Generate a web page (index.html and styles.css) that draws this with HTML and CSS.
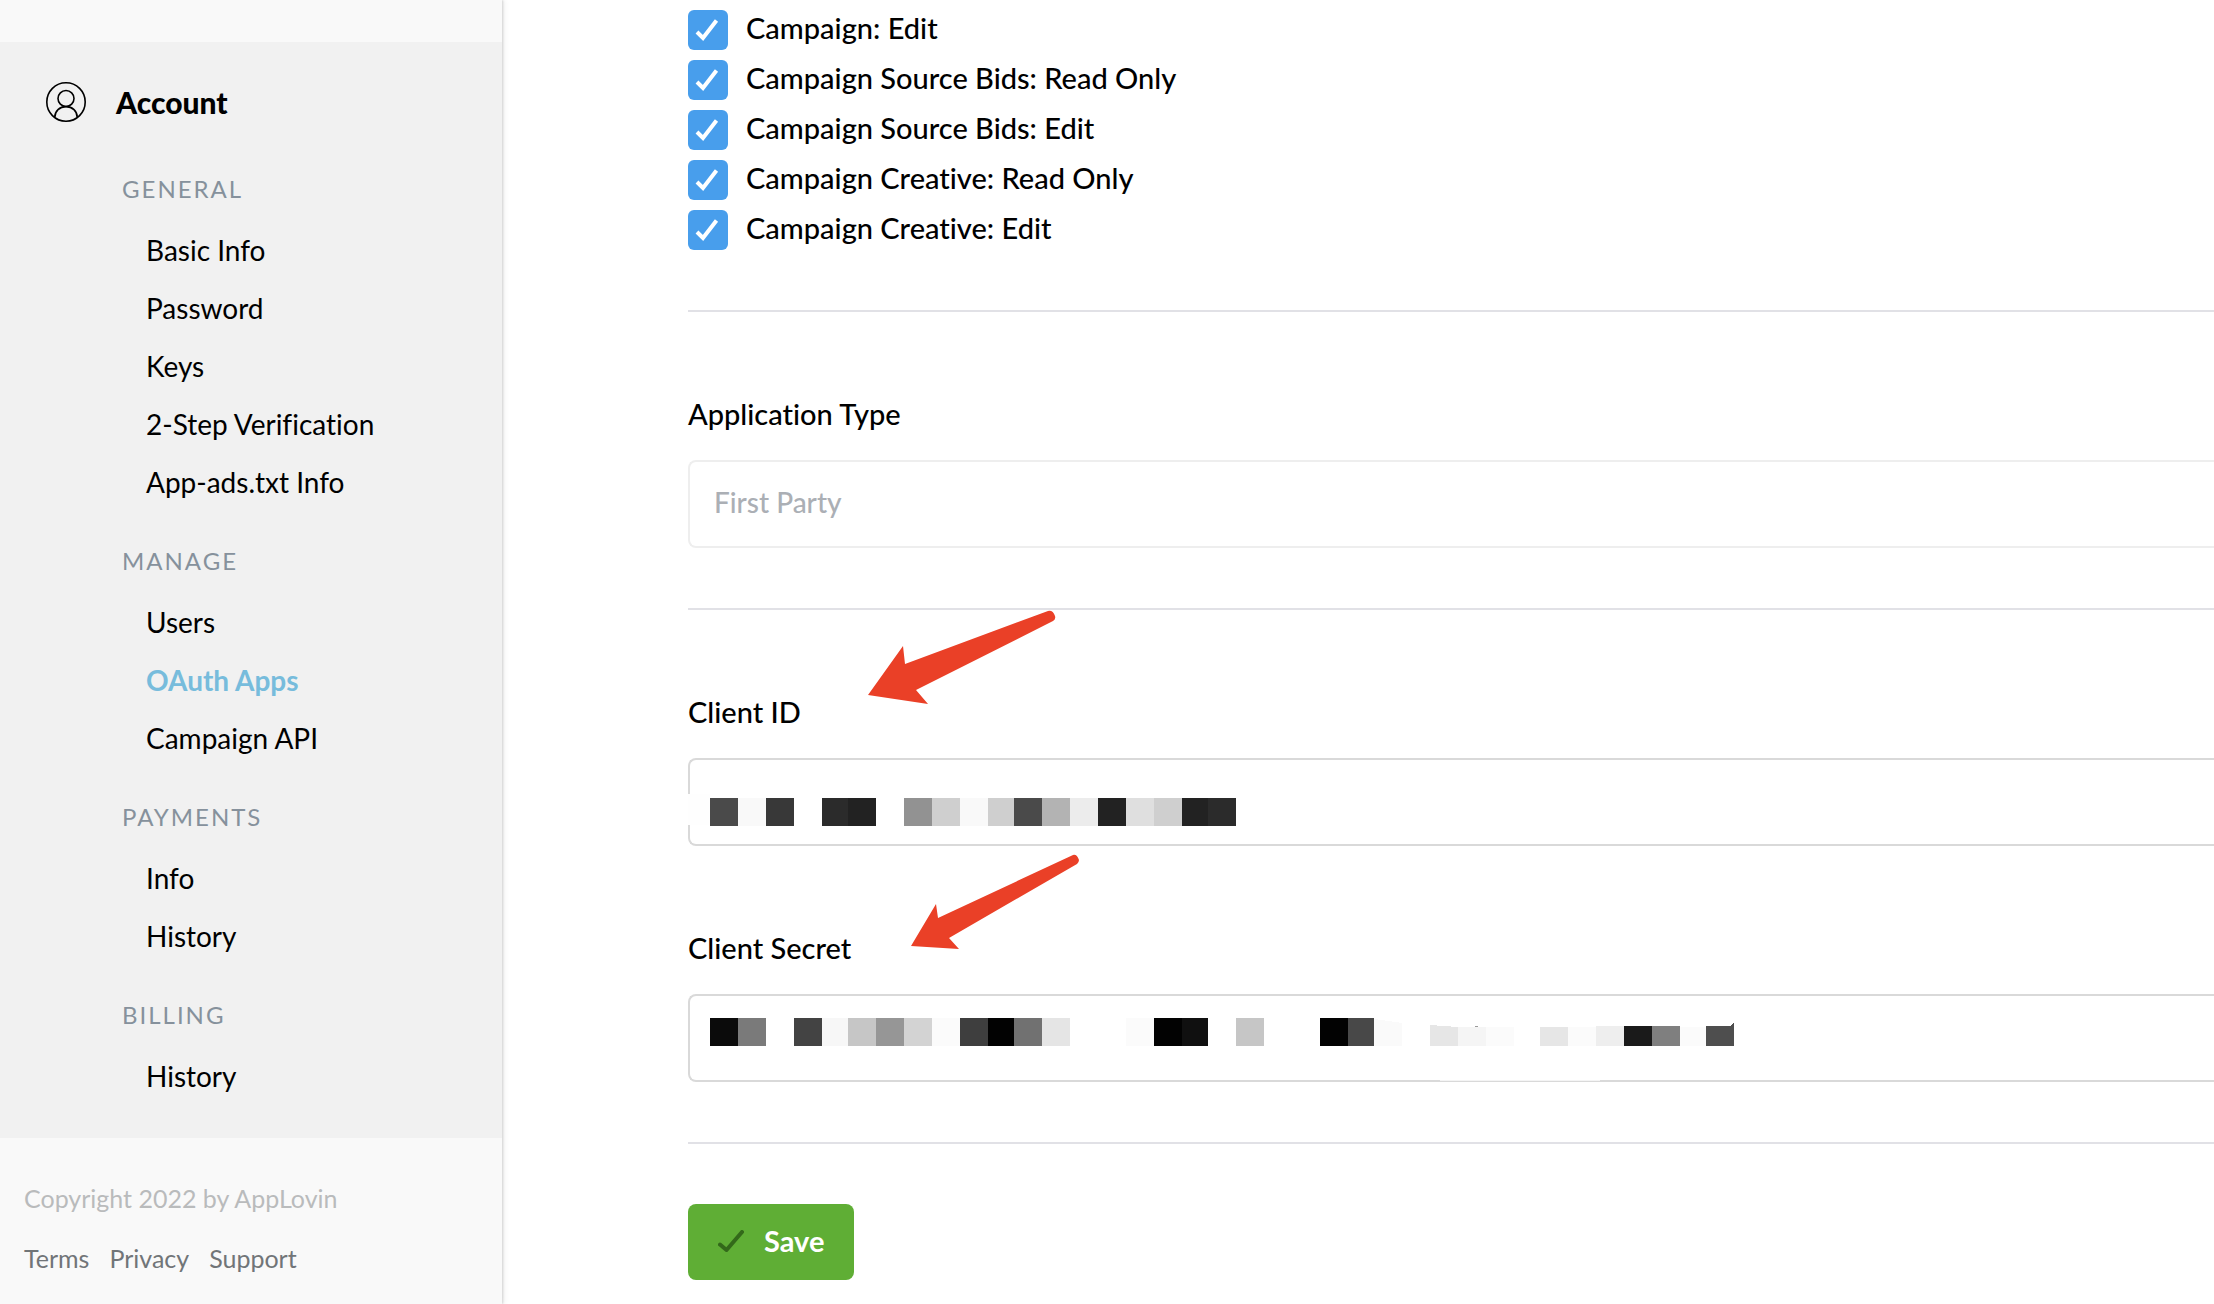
FILE: index.html
```html
<!DOCTYPE html>
<html lang="en">
<head>
<meta charset="utf-8">
<title>OAuth Apps</title>
<link rel="stylesheet" href="styles.css">
</head>
<body>
<div class="layout">
  <aside class="sidebar">
    <nav class="nav">
      <h2 class="nav-head">
        <svg class="nav-icon" viewBox="0 0 40 40" fill="none" stroke="currentColor" stroke-width="1.6"><circle cx="20" cy="20" r="19.2"/><circle cx="20" cy="16.5" r="8"/><path d="M8.800 35.200c0-6 4.800-10.600 11.200-10.600s11.200 4.600 11.200 10.600"/></svg>
        <span>Account</span>
      </h2>
      <h3 class="group-title">GENERAL</h3>
      <ul class="group">
        <li><a href="#">Basic Info</a></li>
        <li><a href="#">Password</a></li>
        <li><a href="#">Keys</a></li>
        <li><a href="#">2-Step Verification</a></li>
        <li><a href="#">App-ads.txt Info</a></li>
      </ul>
      <h3 class="group-title">MANAGE</h3>
      <ul class="group">
        <li><a href="#">Users</a></li>
        <li><a href="#" class="active">OAuth Apps</a></li>
        <li><a href="#">Campaign API</a></li>
      </ul>
      <h3 class="group-title">PAYMENTS</h3>
      <ul class="group">
        <li><a href="#">Info</a></li>
        <li><a href="#">History</a></li>
      </ul>
      <h3 class="group-title">BILLING</h3>
      <ul class="group">
        <li><a href="#">History</a></li>
      </ul>
    </nav>
    <footer class="footer">
      <p class="copyright">Copyright 2022 by AppLovin</p>
      <div class="footer-links"><a href="#">Terms</a><a href="#">Privacy</a><a href="#">Support</a></div>
    </footer>
  </aside>
  <main class="main">
    <form class="form">
      <div class="scopes">
        <label class="scope"><input type="checkbox" checked><span>Campaign: Edit</span></label>
        <label class="scope"><input type="checkbox" checked><span>Campaign Source Bids: Read Only</span></label>
        <label class="scope"><input type="checkbox" checked><span>Campaign Source Bids: Edit</span></label>
        <label class="scope"><input type="checkbox" checked><span>Campaign Creative: Read Only</span></label>
        <label class="scope"><input type="checkbox" checked><span>Campaign Creative: Edit</span></label>
      </div>
      <section class="section">
        <div class="field">
          <label for="app-type">Application Type</label>
          <input id="app-type" class="control" type="text" value="First Party" disabled>
        </div>
      </section>
      <section class="section">
        <div class="field">
          <label for="client-id">Client ID</label>
          <div class="masked">
            <input id="client-id" class="control" type="text">
            <svg class="mask" width="560" height="88" shape-rendering="crispEdges">
              <path fill="#fefefe" d="M0 36h22v31H0z"/>
              <g>
                <path fill="#4a4a4a" d="M22 40h28v28H22zM326 40h28v28h-28z"/>
                <path fill="#f9f9f9" d="M50 40h28v28H50zM272 40h28v28h-28z"/>
                <path fill="#383838" d="M78 40h28v28H78z"/>
                <path fill="#2b2b2b" d="M134 40h26v28h-26zM520 40h28v28h-28z"/>
                <path fill="#222" d="M160 40h28v28h-28zM410 40h28v28h-28zM494 40h26v28h-26z"/>
                <path fill="#929292" d="M216 40h28v28h-28z"/>
                <path fill="#cfcfcf" d="M244 40h28v28h-28zM300 40h26v28h-26zM466 40h28v28h-28z"/>
                <path fill="#b3b3b3" d="M354 40h28v28h-28z"/>
                <path fill="#ececec" d="M382 40h28v28h-28z"/>
                <path fill="#dfdfdf" d="M438 40h28v28h-28z"/>
              </g>
            </svg>
          </div>
          <svg class="arrow arrow-id" width="192" height="96" fill="#ea4027"><path d="M1 85 36 36l2 18L181 1q5-1 7 5 1 3-2 5L49 80l12 14z"/></svg>
        </div>
        <div class="field">
          <label for="client-secret">Client Secret</label>
          <div class="masked">
            <input id="client-secret" class="control" type="text">
            <svg class="mask" width="1060" height="88" shape-rendering="crispEdges">
              <path fill="#0b0b0b" d="M22 24h28v28H22z"/>
              <path fill="#7a7a7a" d="M50 24h28v28H50z"/>
              <path fill="#434343" d="M106 24h28v28h-28z"/>
              <path fill="#f7f7f7" d="M134 24h26v28h-26z"/>
              <path fill="#c6c6c6" d="M160 24h28v28h-28zM548 24h28v28h-28z"/>
              <path fill="#969696" d="M188 24h28v28h-28z"/>
              <path fill="#d3d3d3" d="M216 24h28v28h-28z"/>
              <path fill="#fbfbfb" d="M244 24h28v28h-28zM438 24h28v28h-28z"/>
              <path fill="#3e3e3e" d="M272 24h28v28h-28z"/>
              <path fill="#020202" d="M300 24h26v28h-26zM466 24h28v28h-28zM632 24h28v28h-28z"/>
              <path fill="#717171" d="M326 24h28v28h-28z"/>
              <path fill="#e5e5e5" d="M354 24h28v28h-28z"/>
              <path fill="#101010" d="M494 24h26v28h-26z"/>
              <path fill="#484848" d="M660 24h26v28h-26z"/>
              <path fill="#fafafa" d="M686 25l28 4v23h-28z"/>
              <path fill="#e6e6e6" d="M742 31l28 2v19h-28zM852 33h28v19h-28z"/>
              <path fill="#f5f5f5" d="M770 33h28v19h-28z"/>
              <path fill="#fbfbfb" d="M798 33h28v19h-28zM880 33h28v19h-28zM992 33h26v19h-26z"/>
              <path fill="#eee" d="M908 32h28v20h-28z"/>
              <path fill="#1a1a1a" d="M936 32h28v20h-28z"/>
              <path fill="#7f7f7f" d="M964 32h28v20h-28z"/>
              <path fill="#4e4e4e" d="M1018 32h24l4-3v23h-28z"/>
              <path fill="#9a9a9a" d="M787 32h3v1h-3z"/>
              <path fill="#f4f4f4" d="M752 86h160v1H752z"/>
            </svg>
          </div>
          <svg class="arrow arrow-secret" width="172" height="98" fill="#ea4027"><path d="M1 93 26 51l2 14L163 2q4-1 6 5 0 2-2 4L39 85l10 11z"/></svg>
        </div>
      </section>
      <section class="section actions">
        <button class="save" type="button">
          <svg width="26" height="22" viewBox="0 0 26 22" fill="none" stroke="#33691a" stroke-width="4" stroke-linecap="round" stroke-linejoin="round"><path d="M2 14.500 8.500 20 24 2"/></svg>
          <span>Save</span>
        </button>
      </section>
    </form>
  </main>
</div>
</body>
</html>
```
FILE: styles.css
```css
* {
  box-sizing: border-box;
}

body {
  margin: 0;
  background: #fff;
  color: #000;
  font: 500 28px/40px Lato, "Noto Sans", sans-serif;
  font-variant-ligatures: none;
}

h2, h3, p, ul {
  margin: 0;
  padding: 0;
}

a {
  color: inherit;
  text-decoration: none;
}

.layout {
  display: flex;
  min-height: 100vh;
  overflow: hidden;
}

/* Sidebar */
.sidebar {
  flex: 0 0 502px;
  padding-top: 42px;
  background: #f9f9f9;
  box-shadow: 1px 0 2px #d4d4d4, 2px 0 6px #eee;
}

.nav {
  padding: 40px 0 33px;
  background: #f1f1f1;
}

.nav-head {
  display: flex;
  align-items: center;
  gap: 30px;
  padding-left: 46px;
  font-size: 30px;
  font-weight: 900;
  line-height: 40px;
}

.nav-icon {
  width: 40px;
  height: 40px;
}

.group-title {
  padding: 47px 0 12px 122px;
  color: #86919c;
  font-size: 24px;
  font-weight: 400;
  line-height: 40px;
  letter-spacing: 2px;
}

.group + .group-title {
  padding-top: 30px;
}

.group {
  padding-left: 146px;
  list-style: none;
  font-weight: 400;
}

.group li {
  line-height: 58px;
}

.active {
  color: #77bcdc;
  font-weight: 700;
}

.footer {
  padding: 40px 24px 24px;
  font-size: 25px;
  font-weight: 400;
}

.copyright {
  margin-bottom: 20px;
  color: #b9bbbc;
}

.footer-links {
  display: flex;
  gap: 20px;
  color: #717578;
}

/* Form */
.main {
  flex: 1;
  min-width: 0;
  padding-left: 186px;
}

.scopes {
  display: flex;
  flex-direction: column;
  gap: 10px;
  padding: 10px 0 60px;
}

.scope {
  display: flex;
  gap: 18px;
  font-size: 29px;
}

.scope span {
  line-height: 36px;
}

.scope input {
  appearance: none;
  width: 40px;
  height: 40px;
  margin: 0;
  border-radius: 6px;
  background: #489eec url("data:image/svg+xml,%3Csvg xmlns='http://www.w3.org/2000/svg' viewBox='0 0 40 40'%3E%3Cpath d='M9 22l6 6L28.500 10.500' fill='none' stroke='%23fff' stroke-width='4'/%3E%3C/svg%3E");
}

.section {
  display: flex;
  flex-direction: column;
  gap: 82px;
  padding: 82px 0 60px;
  border-top: 2px solid #e1e1e6;
}

.field {
  position: relative;
  display: flex;
  flex-direction: column;
  gap: 26px;
}

.field label {
  align-self: flex-start;
  font-size: 29px;
}

.control {
  display: block;
  width: 100%;
  height: 88px;
  padding: 0 24px 4px;
  border: 2px solid #d9d9d9;
  border-right: 0;
  border-radius: 8px 0 0 8px;
  background: #fff;
  color: #000;
  font: inherit;
}

.control:disabled {
  border-color: #eee;
  color: #abafb5;
}

.masked {
  position: relative;
}

.mask {
  position: absolute;
  top: 0;
  left: 0;
}

.arrow {
  position: absolute;
}

.arrow-id {
  top: -82px;
  left: 179px;
}

.arrow-secret {
  top: -75px;
  left: 222px;
}

.actions {
  padding: 60px 0 24px;
}

.save {
  display: flex;
  align-items: center;
  align-self: flex-start;
  gap: 20px;
  height: 76px;
  padding: 0 30px 2px;
  border: 0;
  border-radius: 8px;
  background: #5fae35;
  color: #fff;
  font: inherit;
  font-size: 29px;
  font-weight: 700;
}
```
